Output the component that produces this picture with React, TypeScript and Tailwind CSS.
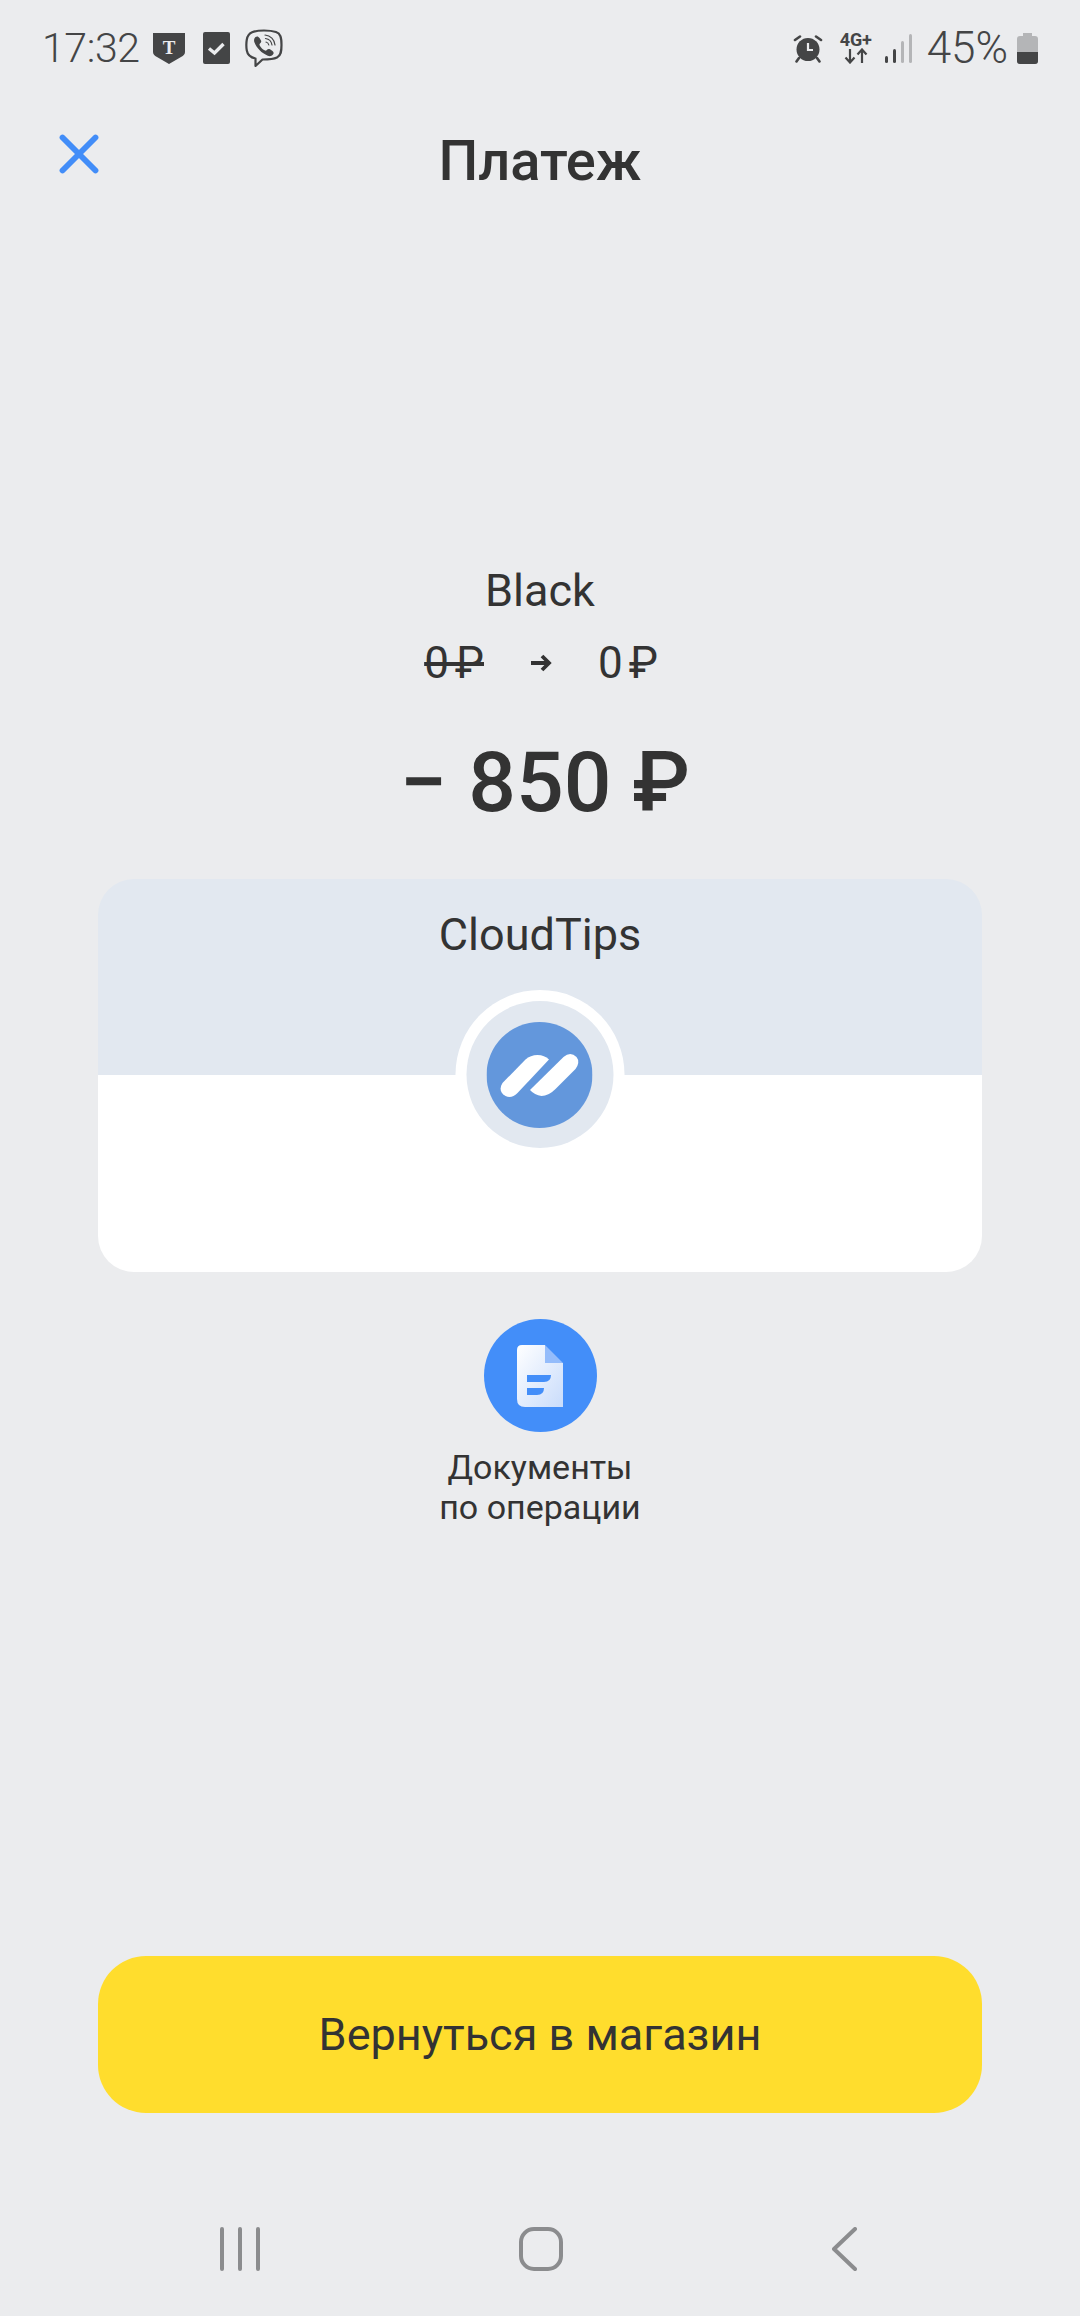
import { X } from 'lucide-react'

function ShieldIcon() {
  return (
    <svg width="32" height="31" viewBox="0 0 32 31">
      <path d="M0 0H32V19Q32 22 28 24L16 31L4 24Q0 22 0 19Z" fill="#444546" />
      <text x="16" y="21" textAnchor="middle" fontSize="19" fontWeight="700" fontFamily="Liberation Serif, serif" fill="#ebecee">T</text>
    </svg>
  )
}

function CheckIcon() {
  return (
    <svg width="27" height="32" viewBox="0 0 27 32">
      <rect width="27" height="32" rx="2" fill="#444546" />
      <path d="M6 16.500L11.500 21L20.500 12" fill="none" stroke="#ebecee" strokeWidth="3.400" />
    </svg>
  )
}

function ViberIcon() {
  return (
    <svg width="38" height="39" viewBox="0 0 38 39">
      <path d="M19 1.500C9 1.500 3 3 1.800 10.500C1.200 14 1.200 18 1.800 21.500C2.600 26.500 6 28.500 10.500 29.500V37L17.500 30.500C22 30.500 28 30.500 32 28.500C36 26.500 36.500 22.500 36.500 16C36.500 8.500 35.500 4.500 31 3C27 1.700 23 1.500 19 1.500Z" fill="none" stroke="#444546" strokeWidth="2.200" strokeLinejoin="round" />
      <path d="M10.500 8C12 7 13.500 7.500 14.500 9L16 11.500C16.600 12.700 16 13.700 15 14.500C14.200 15.100 14.400 16 15 17C16.200 19 17.500 20.300 19.500 21.300C20.500 21.800 21.200 21.800 21.800 21C22.600 20 23.800 19.500 25 20.300L27.500 22C28.800 23 29 24.500 28 25.500C26.500 27.300 24.800 27.500 22.800 26.700C16.500 24 12 19.500 9.500 13.500C8.700 11.500 9 9.500 10.500 8Z" fill="#444546" />
      <path d="M20 6C25.500 6.500 29.500 10.500 30 16M20.500 9.500C24 10 26.500 12.500 27 16M21 13C22.500 13.300 23.500 14.500 23.800 16" fill="none" stroke="#444546" strokeWidth="1.200" strokeLinecap="round" />
    </svg>
  )
}

function AlarmIcon() {
  return (
    <svg width="30" height="29" viewBox="0 0 30 29">
      <circle cx="15" cy="15.500" r="11.500" fill="#444546" />
      <path d="M15 9V16H20" fill="none" stroke="#ebecee" strokeWidth="2.200" />
      <path d="M2 6L7 2.500M28 6L23 2.500M6 24L3.500 27.500M24 24L26.500 27.500" fill="none" stroke="#444546" strokeWidth="2.600" strokeLinecap="round" />
    </svg>
  )
}

function NetworkIcon() {
  return (
    <div className="flex flex-col items-center w-[34px]">
      <span className="text-[18px] leading-[16px] font-bold tracking-[-0.2px] text-[#444546]">4G+</span>
      <svg width="26" height="16" viewBox="0 0 26 16">
        <path d="M7 1V14M2.500 9.500L7 14.500L11.500 9.500M19 15V2M14.500 6.500L19 1.500L23.500 6.500" fill="none" stroke="#444546" strokeWidth="2.200" />
      </svg>
    </div>
  )
}

function SignalIcon() {
  return (
    <svg width="27" height="29" viewBox="0 0 27 29">
      <rect x="0" y="22" width="3" height="7" rx="1.500" fill="#444546" />
      <rect x="8" y="15" width="3" height="14" rx="1.500" fill="#444546" />
      <rect x="16" y="7" width="3" height="22" rx="1.500" fill="#b4b5b7" />
      <rect x="24" y="0" width="3" height="29" rx="1.500" fill="#b4b5b7" />
    </svg>
  )
}

function BatteryIcon() {
  return (
    <svg width="21" height="31" viewBox="0 0 21 31">
      <path d="M6 0H15V3H18Q21 3 21 6V28Q21 31 18 31H3Q0 31 0 28V6Q0 3 3 3H6Z" fill="#b4b5b7" />
      <path d="M0 19H21V28Q21 31 18 31H3Q0 31 0 28Z" fill="#444546" />
    </svg>
  )
}

function TipsLogo() {
  return (
    <svg className="mr-[2px]" width="106" height="106" viewBox="0 0 106 106">
      <circle cx="53" cy="53" r="53" fill="#6397dc" />
      <path d="M16 61L39 37.500Q44 33 51 33Q58 33 62.500 37.500L31 71Q25 77 19 74Q11 69 16 61Z" fill="#fff" />
      <path d="M43.500 68L77 35Q84 29 90 35Q94 40 89 47L69 67Q62 74 55 74Q48 73 43.500 68Z" fill="#fff" />
    </svg>
  )
}

function DocIcon() {
  return (
    <svg width="46" height="62" viewBox="0 0 46 62">
      <defs>
        <linearGradient id="docFill" x1="0" y1="0" x2="1" y2="1">
          <stop offset="0" stopColor="#ffffff" />
          <stop offset="1" stopColor="#c9dcfb" />
        </linearGradient>
      </defs>
      <path d="M5 0H28V18H46V62H8Q0 62 0 54V5Q0 0 5 0Z" fill="url(#docFill)" />
      <path d="M28 0L46 18H28Z" fill="#94bcfb" />
      <path d="M10 30H34Q34 37 27 37H10Z" fill="#438ef9" />
      <path d="M10 43H27Q27 50 20 50H10Z" fill="#438ef9" />
    </svg>
  )
}

export default function App() {
  return (
    <div className="w-full h-[2316px] flex flex-col bg-[#ebecee] font-[Roboto,sans-serif] text-[#333333] overflow-hidden">
      {/* Status bar */}
      <div className="flex items-center justify-between h-[96px] pl-[42px] pr-[42px] text-[#444546]">
        <div className="flex items-center">
          <span className="text-[41px] font-light tracking-[-0.4px] leading-none">17:32</span>
          <div className="flex items-center gap-[18px] ml-[13px]">
            <ShieldIcon />
            <CheckIcon />
            <div className="-ml-[3px]"><ViberIcon /></div>
          </div>
        </div>
        <div className="flex items-center">
          <AlarmIcon />
          <div className="ml-[16px]"><NetworkIcon /></div>
          <div className="ml-[12px]"><SignalIcon /></div>
          <span className="ml-[15px] text-[44px] font-light leading-none">45%</span>
          <div className="ml-[9px]"><BatteryIcon /></div>
        </div>
      </div>

      {/* Header */}
      <div className="relative flex items-center justify-center h-[64px] mt-[33px]">
        <X className="absolute left-[46px] top-[-8px] text-[#428df8]" size={66} strokeWidth={2.100} />
        <h1 className="text-[56px] font-medium leading-none">Платеж</h1>
      </div>

      {/* Operation */}
      <div className="flex flex-col items-center mt-[368px]">
        <div className="text-[45px] leading-[60px]">Black</div>
        <div className="flex items-center text-[44px] leading-[60px] mt-[12px] pl-[2px]">
          <span className="line-through [word-spacing:-5px]">0 ₽</span>
          <svg className="mx-[46px]" width="22" height="18" viewBox="0 0 22 18">
            <path d="M1 9H19M12 2L19 9L12 16" fill="none" stroke="#333333" strokeWidth="3.800" />
          </svg>
          <span className="[word-spacing:-5px]">0 ₽</span>
        </div>
        <div className="text-[84px] font-medium leading-none mt-[48px] pl-[10px]">− 850 ₽</div>
      </div>

      {/* Merchant card */}
      <div className="relative mx-[98px] mt-[54px] h-[393px] rounded-[36px] overflow-hidden flex flex-col">
        <div className="h-[196px] bg-[#e2e8f0] flex justify-center pt-[26px]">
          <span className="text-[45px] leading-[60px]">CloudTips</span>
        </div>
        <div className="flex-1 bg-white" />
        <div className="absolute left-1/2 top-[111px] -translate-x-1/2 w-[169px] h-[169px] rounded-full bg-white flex items-center justify-center">
          <div className="w-[147px] h-[147px] rounded-full bg-[#e2e8f0] flex items-center justify-center">
            <TipsLogo />
          </div>
        </div>
      </div>

      {/* Documents */}
      <div className="flex flex-col items-center mt-[47px]">
        <div className="w-[113px] h-[113px] rounded-full bg-[#438ef9] flex items-center justify-center">
          <DocIcon />
        </div>
        <div className="text-[34px] leading-[40px] text-center mt-[15px]">
          Документы<br />по операции
        </div>
      </div>

      {/* Action */}
      <div className="flex-1 flex flex-col justify-end">
        <button className="mx-[98px] h-[157px] rounded-[48px] bg-[#ffdd2d] text-[45px] text-[#333333]">
          Вернуться в магазин
        </button>
      </div>

      {/* Navigation bar */}
      <div className="flex items-start h-[203px] pt-[114px] pl-[219px]">
        <svg width="42" height="44" viewBox="0 0 42 44">
          <path d="M3 2V42M21 2V42M39 2V42" stroke="#8b8c8e" strokeWidth="4" strokeLinecap="round" />
        </svg>
        <svg className="ml-[258px]" width="44" height="44" viewBox="0 0 44 44">
          <rect x="2" y="2" width="40" height="40" rx="13" fill="none" stroke="#8b8c8e" strokeWidth="4" />
        </svg>
        <svg className="ml-[269px]" width="25" height="44" viewBox="0 0 25 44">
          <path d="M23 2L2 22L23 42" fill="none" stroke="#8b8c8e" strokeWidth="4" strokeLinecap="round" strokeLinejoin="round" />
        </svg>
      </div>
    </div>
  )
}
